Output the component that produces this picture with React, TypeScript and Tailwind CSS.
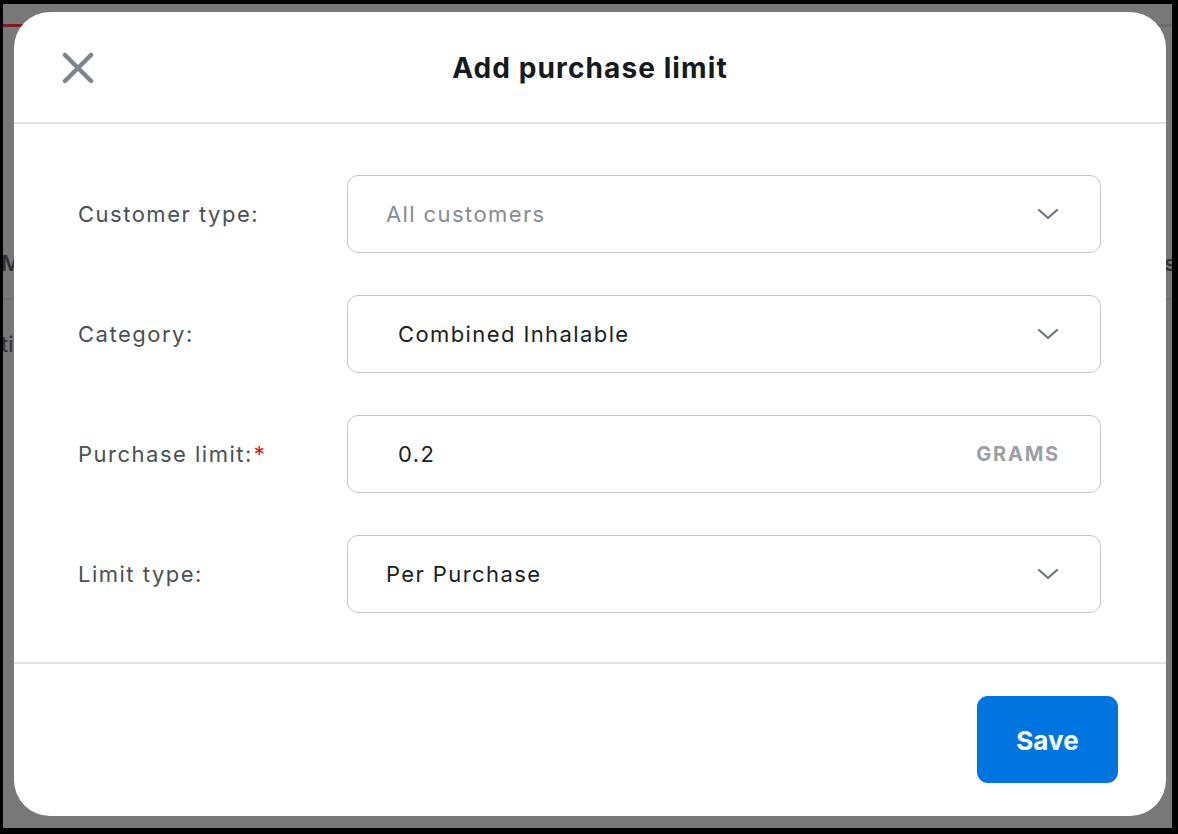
import React from "react";

function Chevron() {
  return (
    <svg width="24" height="24" viewBox="0 0 24 24" fill="none" className="shrink-0">
      <path d="M3 8l9 8 9-8" stroke="#6f787e" strokeWidth="2.2" strokeLinecap="round" strokeLinejoin="round" />
    </svg>
  );
}

type Row = {
  label: string;
  value: string;
  placeholder?: boolean;
  required?: boolean;
  inset?: boolean;
  suffix?: string;
};

const rows: Row[] = [
  { label: "Customer type:", value: "All customers", placeholder: true },
  { label: "Category:", value: "Combined Inhalable", inset: true },
  { label: "Purchase limit:", value: "0.2", required: true, inset: true, suffix: "GRAMS" },
  { label: "Limit type:", value: "Per Purchase" },
];

export default function App() {
  return (
    <div
      className="w-[1178px] h-[834px] bg-black pt-[4px] pl-[3px] pr-[6px] pb-[6px]"
      style={{ fontFamily: "Inter, 'Noto Sans', sans-serif" }}
    >
      <div className="relative w-full h-full bg-[#787878] overflow-hidden">
        {/* page behind the overlay */}
        <div className="flex h-[3px] mt-[20px]">
          <div className="w-[40px] bg-[#7d1c26]" />
          <div className="flex-1 bg-[#6c6c6c]" />
        </div>
        <div className="flex justify-between items-center mt-[225px] text-[22px] font-semibold text-[#2e3236] leading-none">
          <span className="-ml-[2px]">M</span>
          <span className="-mr-[4px]">s</span>
        </div>
        <div className="h-[2px] bg-[#6e6e6e] mt-[24px]" />
        <div className="text-[22px] text-[#2e3236] mt-[28px] -ml-[2px]">ti</div>

        {/* modal */}
        <div className="absolute left-[11px] top-[8px] w-[1152px] h-[804px] bg-white rounded-[36px] flex flex-col">
          <div className="relative h-[112px] border-b-2 border-[#e2e2e2] flex items-center justify-center">
            <button className="absolute left-[48px] top-[40px] w-[32px] h-[32px] flex items-center justify-center">
              <svg width="32" height="32" viewBox="0 0 32 32" fill="none">
                <path d="M3 3l26 26M29 3L3 29" stroke="#7c868c" strokeWidth="4.5" strokeLinecap="round" />
              </svg>
            </button>
            <h1 className="text-[28px] font-bold text-[#171a1c] tracking-[1.1px] pt-[2px]">Add purchase limit</h1>
          </div>

          <div className="flex flex-col gap-[42px] pt-[51px] pb-[49px] pl-[64px] pr-[65px] border-b-2 border-[#e2e2e2]">
            {rows.map((r) => (
              <div key={r.label} className="flex items-center">
                <div className="w-[269px] shrink-0 text-[22px] text-[#4a5056] tracking-[1.5px]">
                  {r.label}
                  {r.required && <span className="text-[#e0101c] ml-[1px]">*</span>}
                </div>
                <div
                  className={
                    "flex-1 h-[78px] rounded-[11px] border-[1.5px] border-[#c3c7ca] flex items-center pr-[40px] " +
                    (r.inset ? "pl-[50px]" : "pl-[38px]")
                  }
                >
                  <span
                    className={
                      "flex-1 text-[22px] tracking-[1.4px] " +
                      (r.placeholder ? "text-[#868d93]" : "text-[#1b1e21]")
                    }
                  >
                    {r.value}
                  </span>
                  {r.suffix ? (
                    <span className="text-[20px] font-bold text-[#9aa0a5] tracking-[1.8px]">{r.suffix}</span>
                  ) : (
                    <Chevron />
                  )}
                </div>
              </div>
            ))}
          </div>

          <div className="flex-1 flex justify-end items-start pt-[32px] pr-[48px]">
            <button className="w-[141px] h-[87px] rounded-[11px] bg-[#0075e0] text-white text-[26px] font-bold pt-[2px]">
              Save
            </button>
          </div>
        </div>
      </div>
    </div>
  );
}
